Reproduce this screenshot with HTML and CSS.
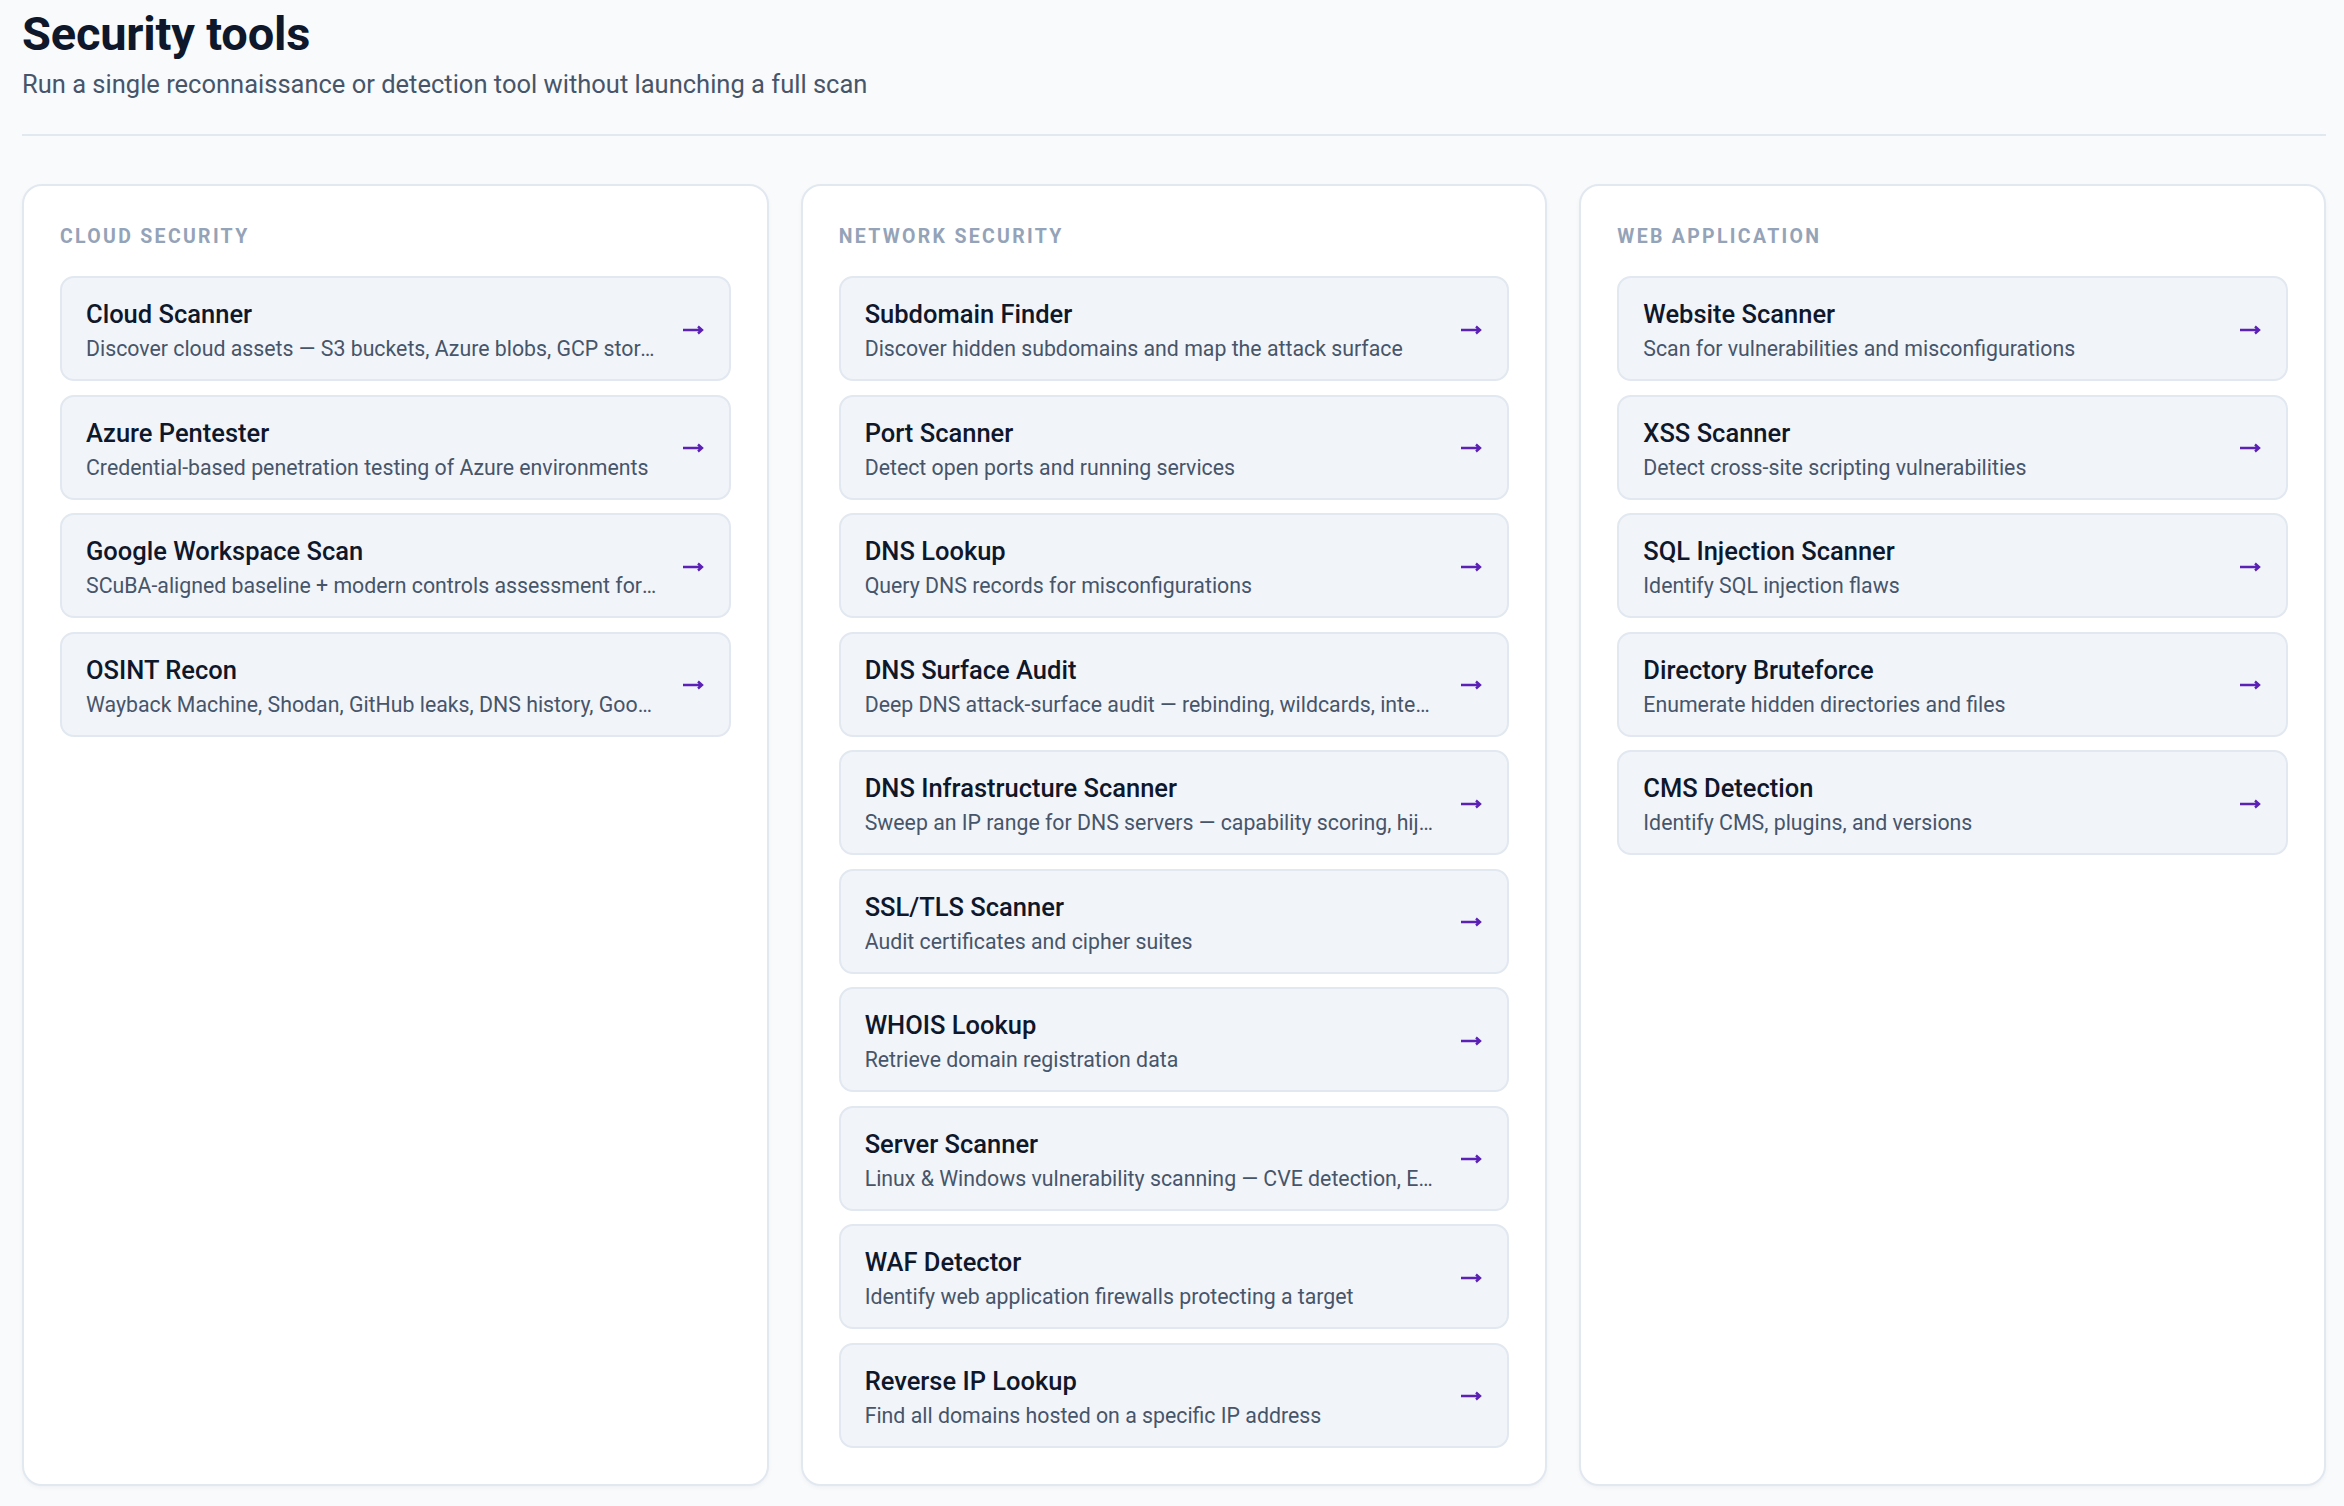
FILE: index.html
```html
<!DOCTYPE html>
<html lang="en">
<head>
  <meta charset="UTF-8" />
  <meta name="viewport" content="width=device-width, initial-scale=1" />
  <title>Security tools</title>
  <link rel="stylesheet" href="styles.css">
</head>
<body>
  <div class="page">
    <header class="page-head">
      <h1>Security tools</h1>
      <p class="lead">Run a single reconnaissance or detection tool without launching a full scan</p>
    </header>

    <div class="columns">
      <section class="panel">
        <h3 class="panel-label">Cloud Security</h3>
        <div class="tool-list">
          <a class="tool" href="#">
            <div class="tool-text">
              <div class="tool-name">Cloud Scanner</div>
              <div class="tool-desc">Discover cloud assets — S3 buckets, Azure blobs, GCP storage and exposed services</div>
            </div>
            <svg class="arrow" viewBox="0 0 22 12"><path d="M1 6H20M16 2.5L20 6L16 9.5"/></svg>
          </a>
          <a class="tool" href="#">
            <div class="tool-text">
              <div class="tool-name">Azure Pentester</div>
              <div class="tool-desc">Credential-based penetration testing of Azure environments</div>
            </div>
            <svg class="arrow" viewBox="0 0 22 12"><path d="M1 6H20M16 2.5L20 6L16 9.5"/></svg>
          </a>
          <a class="tool" href="#">
            <div class="tool-text">
              <div class="tool-name">Google Workspace Scan</div>
              <div class="tool-desc">SCuBA-aligned baseline + modern controls assessment for Google Workspace tenants</div>
            </div>
            <svg class="arrow" viewBox="0 0 22 12"><path d="M1 6H20M16 2.5L20 6L16 9.5"/></svg>
          </a>
          <a class="tool" href="#">
            <div class="tool-text">
              <div class="tool-name">OSINT Recon</div>
              <div class="tool-desc">Wayback Machine, Shodan, GitHub leaks, DNS history, Google dorks and more</div>
            </div>
            <svg class="arrow" viewBox="0 0 22 12"><path d="M1 6H20M16 2.5L20 6L16 9.5"/></svg>
          </a>
        </div>
      </section>

      <section class="panel">
        <h3 class="panel-label">Network Security</h3>
        <div class="tool-list">
          <a class="tool" href="#">
            <div class="tool-text">
              <div class="tool-name">Subdomain Finder</div>
              <div class="tool-desc">Discover hidden subdomains and map the attack surface</div>
            </div>
            <svg class="arrow" viewBox="0 0 22 12"><path d="M1 6H20M16 2.5L20 6L16 9.5"/></svg>
          </a>
          <a class="tool" href="#">
            <div class="tool-text">
              <div class="tool-name">Port Scanner</div>
              <div class="tool-desc">Detect open ports and running services</div>
            </div>
            <svg class="arrow" viewBox="0 0 22 12"><path d="M1 6H20M16 2.5L20 6L16 9.5"/></svg>
          </a>
          <a class="tool" href="#">
            <div class="tool-text">
              <div class="tool-name">DNS Lookup</div>
              <div class="tool-desc">Query DNS records for misconfigurations</div>
            </div>
            <svg class="arrow" viewBox="0 0 22 12"><path d="M1 6H20M16 2.5L20 6L16 9.5"/></svg>
          </a>
          <a class="tool" href="#">
            <div class="tool-text">
              <div class="tool-name">DNS Surface Audit</div>
              <div class="tool-desc">Deep DNS attack-surface audit — rebinding, wildcards, internal name leaks</div>
            </div>
            <svg class="arrow" viewBox="0 0 22 12"><path d="M1 6H20M16 2.5L20 6L16 9.5"/></svg>
          </a>
          <a class="tool" href="#">
            <div class="tool-text">
              <div class="tool-name">DNS Infrastructure Scanner</div>
              <div class="tool-desc">Sweep an IP range for DNS servers — capability scoring, hijack risk</div>
            </div>
            <svg class="arrow" viewBox="0 0 22 12"><path d="M1 6H20M16 2.5L20 6L16 9.5"/></svg>
          </a>
          <a class="tool" href="#">
            <div class="tool-text">
              <div class="tool-name">SSL/TLS Scanner</div>
              <div class="tool-desc">Audit certificates and cipher suites</div>
            </div>
            <svg class="arrow" viewBox="0 0 22 12"><path d="M1 6H20M16 2.5L20 6L16 9.5"/></svg>
          </a>
          <a class="tool" href="#">
            <div class="tool-text">
              <div class="tool-name">WHOIS Lookup</div>
              <div class="tool-desc">Retrieve domain registration data</div>
            </div>
            <svg class="arrow" viewBox="0 0 22 12"><path d="M1 6H20M16 2.5L20 6L16 9.5"/></svg>
          </a>
          <a class="tool" href="#">
            <div class="tool-text">
              <div class="tool-name">Server Scanner</div>
              <div class="tool-desc">Linux &amp; Windows vulnerability scanning — CVE detection, EternalBlue and more</div>
            </div>
            <svg class="arrow" viewBox="0 0 22 12"><path d="M1 6H20M16 2.5L20 6L16 9.5"/></svg>
          </a>
          <a class="tool" href="#">
            <div class="tool-text">
              <div class="tool-name">WAF Detector</div>
              <div class="tool-desc">Identify web application firewalls protecting a target</div>
            </div>
            <svg class="arrow" viewBox="0 0 22 12"><path d="M1 6H20M16 2.5L20 6L16 9.5"/></svg>
          </a>
          <a class="tool" href="#">
            <div class="tool-text">
              <div class="tool-name">Reverse IP Lookup</div>
              <div class="tool-desc">Find all domains hosted on a specific IP address</div>
            </div>
            <svg class="arrow" viewBox="0 0 22 12"><path d="M1 6H20M16 2.5L20 6L16 9.5"/></svg>
          </a>
        </div>
      </section>

      <section class="panel">
        <h3 class="panel-label">Web Application</h3>
        <div class="tool-list">
          <a class="tool" href="#">
            <div class="tool-text">
              <div class="tool-name">Website Scanner</div>
              <div class="tool-desc">Scan for vulnerabilities and misconfigurations</div>
            </div>
            <svg class="arrow" viewBox="0 0 22 12"><path d="M1 6H20M16 2.5L20 6L16 9.5"/></svg>
          </a>
          <a class="tool" href="#">
            <div class="tool-text">
              <div class="tool-name">XSS Scanner</div>
              <div class="tool-desc">Detect cross-site scripting vulnerabilities</div>
            </div>
            <svg class="arrow" viewBox="0 0 22 12"><path d="M1 6H20M16 2.5L20 6L16 9.5"/></svg>
          </a>
          <a class="tool" href="#">
            <div class="tool-text">
              <div class="tool-name">SQL Injection Scanner</div>
              <div class="tool-desc">Identify SQL injection flaws</div>
            </div>
            <svg class="arrow" viewBox="0 0 22 12"><path d="M1 6H20M16 2.5L20 6L16 9.5"/></svg>
          </a>
          <a class="tool" href="#">
            <div class="tool-text">
              <div class="tool-name">Directory Bruteforce</div>
              <div class="tool-desc">Enumerate hidden directories and files</div>
            </div>
            <svg class="arrow" viewBox="0 0 22 12"><path d="M1 6H20M16 2.5L20 6L16 9.5"/></svg>
          </a>
          <a class="tool" href="#">
            <div class="tool-text">
              <div class="tool-name">CMS Detection</div>
              <div class="tool-desc">Identify CMS, plugins, and versions</div>
            </div>
            <svg class="arrow" viewBox="0 0 22 12"><path d="M1 6H20M16 2.5L20 6L16 9.5"/></svg>
          </a>
        </div>
      </section>
    </div>
  </div>
</body>
</html>
```

FILE: styles.css
```css
/* Base */
* {
  box-sizing: border-box;
}
body {
  margin: 0;
  background: #f8fafc;
  font-family: Roboto, 'Noto Sans', sans-serif;
  color: #0f172a;
}
.page {
  padding: 7px 18px 22px 22px;
}

/* Header */
.page-head {
  padding-bottom: 32px;
  border-bottom: 2px solid #e2e8f0;
  margin-bottom: 48px;
}
h1 {
  margin: 0;
  font-size: 47px;
  line-height: 54px;
  font-weight: 700;
  letter-spacing: -0.2px;
  color: #0f172a;
}
.lead {
  margin: 5px 0 0;
  font-size: 25.5px;
  line-height: 36px;
  color: #475569;
}

/* Columns */
.columns {
  display: grid;
  grid-template-columns: repeat(3, minmax(0, 1fr));
  gap: 32px;
  align-items: stretch;
}
.panel {
  min-width: 0;
  background: #fff;
  border: 2px solid #e2e8f0;
  border-radius: 20px;
  padding: 37px 36px 36px;
  box-shadow: 0 2px 4px rgba(15, 23, 42, 0.04);
}
.panel-label {
  margin: 0 0 26px;
  font-size: 19.5px;
  line-height: 27px;
  font-weight: 700;
  letter-spacing: 2.3px;
  text-transform: uppercase;
  color: #94a3b8;
}
.tool-list {
  display: flex;
  flex-direction: column;
  gap: 13.5px;
}

/* Tool card */
.tool {
  display: flex;
  align-items: center;
  gap: 24px;
  padding: 21px 25px 15px 24px;
  background: #f1f4f9;
  border: 2px solid #e2e8f0;
  border-radius: 14px;
  text-decoration: none;
  color: inherit;
}
.tool-text {
  flex: 1;
  min-width: 0;
}
.tool-name {
  font-size: 25.5px;
  line-height: 30px;
  font-weight: 500;
  color: #0f172a;
}
.tool-desc {
  margin-top: 5px;
  font-size: 21.3px;
  line-height: 30px;
  color: #475569;
  white-space: nowrap;
  overflow: hidden;
  text-overflow: ellipsis;
}
.arrow {
  flex: none;
  width: 22px;
  height: 12px;
  margin-top: -4px;
  fill: none;
  stroke: #5b21b6;
  stroke-width: 2.4;
}
```
